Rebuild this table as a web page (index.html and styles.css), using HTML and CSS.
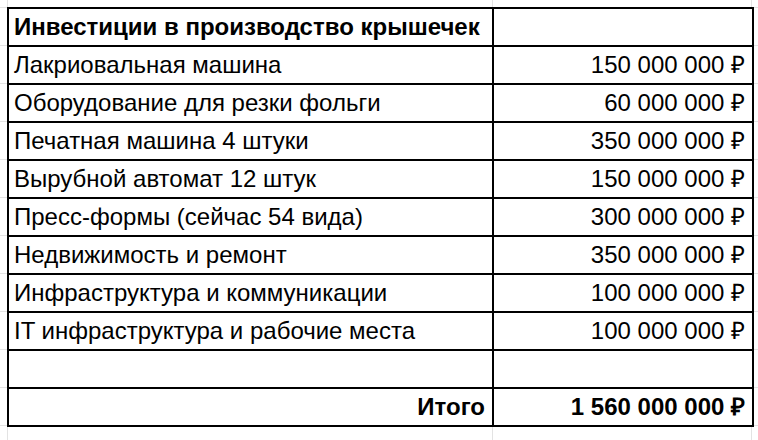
FILE: index.html
```html
<!DOCTYPE html>
<html lang="ru">
<head>
<meta charset="utf-8">
<link rel="stylesheet" href="styles.css">
</head>
<body>
<table class="sheet">
  <colgroup><col class="c-name"><col class="c-sum"></colgroup>
  <tr class="head"><td>Инвестиции в производство крышечек</td><td></td></tr>
  <tr><td>Лакриовальная машина</td><td class="num">150 000 000 ₽</td></tr>
  <tr><td>Оборудование для резки фольги</td><td class="num">60 000 000 ₽</td></tr>
  <tr><td>Печатная машина 4 штуки</td><td class="num">350 000 000 ₽</td></tr>
  <tr><td>Вырубной автомат 12 штук</td><td class="num">150 000 000 ₽</td></tr>
  <tr><td>Пресс-формы (сейчас 54 вида)</td><td class="num">300 000 000 ₽</td></tr>
  <tr><td>Недвижимость и ремонт</td><td class="num">350 000 000 ₽</td></tr>
  <tr><td>Инфраструктура и коммуникации</td><td class="num">100 000 000 ₽</td></tr>
  <tr><td>IT инфраструктура и рабочие места</td><td class="num">100 000 000 ₽</td></tr>
  <tr><td></td><td></td></tr>
  <tr class="total"><td class="num">Итого</td><td class="num">1 560 000 000 ₽</td></tr>
</table>
</body>
</html>
```
FILE: styles.css
```css
html, body {
  margin: 0;
  padding: 0;
  width: 758px;
  height: 440px;
  overflow: hidden;
  background-color: #fff;
  background-image:
    linear-gradient(90deg, transparent 7px, #e3e3e3 7px 8px, transparent 8px 492px, #e3e3e3 492px 493px, transparent 493px 751px, #e3e3e3 751px 752px, transparent 752px),
    repeating-linear-gradient(180deg, transparent 0 7px, #e3e3e3 7px 8px, transparent 8px 38px);
}

.sheet {
  margin: 7px 0 0 7px;
  border-collapse: collapse;
  table-layout: fixed;
  width: 745px;
  background: #fff;
  font-family: "Liberation Sans", Arial, sans-serif;
  font-size: 24px;
  color: #000;
}

.c-name { width: 485px; }
.c-sum { width: 260px; }

.sheet td {
  height: 36px;
  padding: 0 7px 0 5px;
  border: 2px solid #000;
  white-space: nowrap;
  overflow: hidden;
  vertical-align: middle;
  line-height: 36px;
}

.sheet .num { text-align: right; }

.head td, .total td { font-weight: bold; }
```
